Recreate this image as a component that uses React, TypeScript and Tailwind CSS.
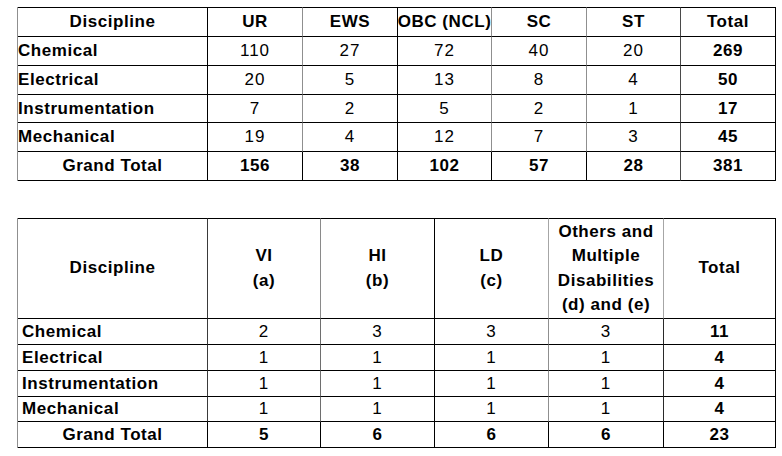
const gray = "border-r-[#8f8f8f]";
const dark = "border-r-[#4a4a4a]";
const black = "border-r-black";

type Row = { name: string; vals: (string | number)[]; total: string | number };

const reserved: Row[] = [
  { name: "Chemical", vals: [110, 27, 72, 40, 20], total: 269 },
  { name: "Electrical", vals: [20, 5, 13, 8, 4], total: 50 },
  { name: "Instrumentation", vals: [7, 2, 5, 2, 1], total: 17 },
  { name: "Mechanical", vals: [19, 4, 12, 7, 3], total: 45 },
];

const pwd: Row[] = [
  { name: "Chemical", vals: [2, 3, 3, 3], total: 11 },
  { name: "Electrical", vals: [1, 1, 1, 1], total: 4 },
  { name: "Instrumentation", vals: [1, 1, 1, 1], total: 4 },
  { name: "Mechanical", vals: [1, 1, 1, 1], total: 4 },
];

const label = "font-bold text-[17px] tracking-[0.55px] whitespace-nowrap";
const num = "text-[17px] tracking-[1px]";

function CategoryTable() {
  const cols = [black, gray, black, gray, gray, dark, black];
  const heads = ["Discipline", "UR", "EWS", "OBC (NCL)", "SC", "ST", "Total"];
  const rowH = ["h-[29px]", "h-[29px]", "h-[28px]", "h-[29px]"];
  return (
    <div className="ml-[17px] mt-[7px] grid w-[758px] grid-cols-[190px_95px_95px_94px_95px_94px_95px] border-l border-l-[#8f8f8f] text-black">
      {heads.map((h, i) => (
        <div
          key={h}
          className={`flex h-[30px] items-center justify-center border-t border-b border-r border-t-black border-b-black ${cols[i]} ${label} ${i === 3 ? "tracking-[-0.3px]" : ""}`}
        >
          {h}
        </div>
      ))}
      {reserved.map((r, ri) => (
        <div key={r.name} className="contents">
          <div className={`flex ${rowH[ri]} items-center border-b border-r border-b-black ${cols[0]} ${label}`}>
            {r.name}
          </div>
          {r.vals.map((v, i) => (
            <div key={i} className={`flex ${rowH[ri]} items-center justify-center border-b border-r border-b-black ${cols[i + 1]} ${num}`}>
              {v}
            </div>
          ))}
          <div className={`flex ${rowH[ri]} items-center justify-center border-b border-r border-b-black ${cols[6]} ${label}`}>
            {r.total}
          </div>
        </div>
      ))}
      {["Grand Total", 156, 38, 102, 57, 28, 381].map((v, i) => (
        <div
          key={i}
          className={`flex h-[29px] items-center justify-center border-b border-r border-black ${i === 5 ? dark : ""} ${label}`}
        >
          {v}
        </div>
      ))}
    </div>
  );
}

function PwdTable() {
  const head = ["border-r-[#3a3a3a]", "border-r-[#8a8a8a]", black, "border-r-[#a6a6a6]", "border-r-[#a6a6a6]", black];
  const cols = ["border-r-[#3a3a3a]", "border-r-[#6e6e6e]", black, "border-r-[#8f8f8f]", "border-r-[#2a2a2a]", black];
  const rowH = ["h-[26px]", "h-[26px]", "h-[26px]", "h-[25px]"];
  const heads = [
    ["Discipline"],
    ["VI", "(a)"],
    ["HI", "(b)"],
    ["LD", "(c)"],
    ["Others and", "Multiple", "Disabilities", "(d) and (e)"],
    ["Total"],
  ];
  return (
    <div className="ml-[17px] mt-[37px] grid w-[758px] grid-cols-[190px_113px_114px_114px_115px_112px] border-l border-l-[#8f8f8f] text-black">
      {heads.map((h, i) => (
        <div
          key={i}
          className={`flex h-[101px] flex-col items-center justify-center border-t border-b border-r border-t-black border-b-black ${head[i]} ${label} leading-[24.5px]`}
        >
          {h.map((l) => (
            <span key={l}>{l}</span>
          ))}
        </div>
      ))}
      {pwd.map((r, ri) => (
        <div key={r.name} className="contents">
          <div className={`flex ${rowH[ri]} items-center border-b border-r border-b-black ${cols[0]} pl-[4px] ${label}`}>
            {r.name}
          </div>
          {r.vals.map((v, i) => (
            <div key={i} className={`flex ${rowH[ri]} items-center justify-center border-b border-r border-b-black ${cols[i + 1]} ${num}`}>
              {v}
            </div>
          ))}
          <div className={`flex ${rowH[ri]} items-center justify-center border-b border-r border-b-black ${cols[5]} ${label}`}>
            {r.total}
          </div>
        </div>
      ))}
      {["Grand Total", 5, 6, 6, 6, 23].map((v, i) => (
        <div key={i} className={`flex h-[26px] items-center justify-center border-b border-r border-black ${label}`}>
          {v}
        </div>
      ))}
    </div>
  );
}

export default function App() {
  return (
    <div className="h-[456px] w-[782px] overflow-hidden bg-white font-['Liberation_Sans',Arial,sans-serif]">
      <CategoryTable />
      <PwdTable />
    </div>
  );
}
